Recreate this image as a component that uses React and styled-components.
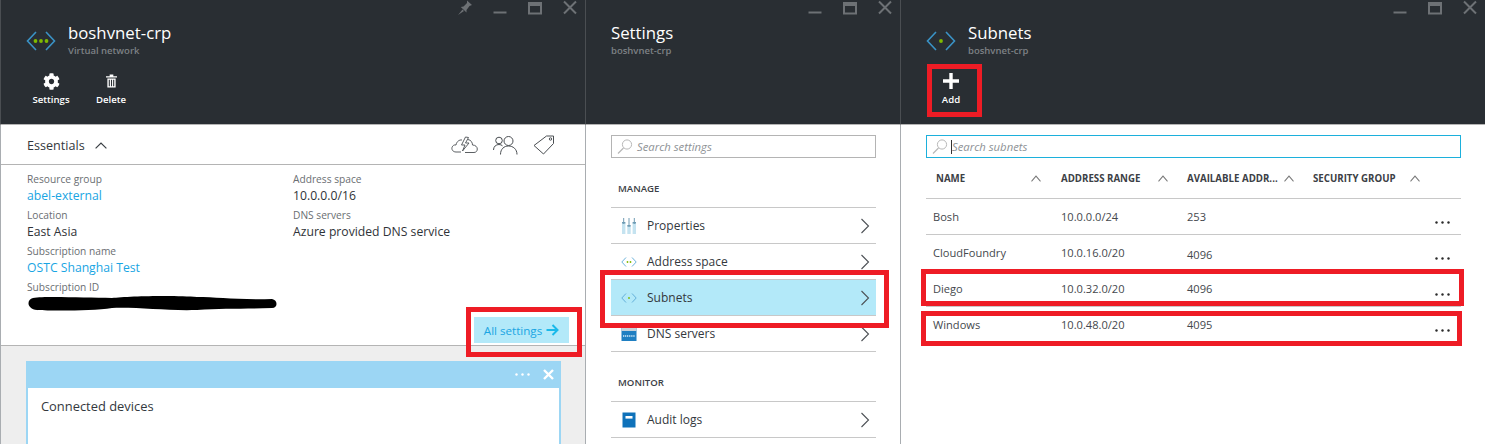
import React from "react";
import styled, { createGlobalStyle } from "styled-components";
import { FaCog } from "react-icons/fa";

const Global = createGlobalStyle`
  * { box-sizing: border-box; }
  html, body { margin: 0; padding: 0; background: #fff; }
  body { font-family: "Open Sans", "Liberation Sans", sans-serif; overflow: hidden; }
`;

const Page = styled.div`
  position: relative; width: 1485px; height: 444px; overflow: hidden;
  display: grid; grid-template-columns: 585px 315px 585px; background: #fff;
`;
const Panel = styled.section`display: flex; flex-direction: column; height: 444px; min-width: 0;`;
const Header = styled.header`
  position: relative; flex: 0 0 125px; background: #292e33;
  border-left: 1px solid #4a4e52; border-bottom: 1px solid #b4b4b4;
  display: flex; flex-direction: column;
`;
const Controls = styled.div`
  height: 18px; display: flex; justify-content: flex-end; align-items: flex-start;
  padding-right: 7px; color: #6d7175;
`;
const Ctl = styled.svg`display: block; width: 16px; height: 16px; margin-left: 19px; flex: none;`;
const TitleRow = styled.div`
  height: 44px; margin-top: 4px; display: flex; align-items: flex-start; padding-left: 25px;
`;
const HexWrap = styled.svg`width: 30px; height: 20px; margin: 9px 12px 0 0; flex: none; display: block;`;
const Titles = styled.div`display: flex; flex-direction: column;`;
const Title = styled.h1`margin: 0; font-size: 16.8px; line-height: 22px; font-weight: 400; color: #fff; white-space: nowrap;`;
const Sub = styled.div`font-size: 9.5px; line-height: 13px; color: #7d8185; font-weight: 600; white-space: nowrap;`;
const Commands = styled.div`display: flex; padding-left: 20px; margin-top: 4px;`;
const Cmd = styled.div`width: 60px; display: flex; flex-direction: column; align-items: center; color: #fff;`;
const CmdIcon = styled.div`height: 22px; display: flex; align-items: center; justify-content: center; font-size: 17px;`;
const CmdLabel = styled.div`font-size: 9.6px; line-height: 14px; margin-top: 1px; font-weight: 600; color: #fff;`;

const Body = styled.div`flex: 1; border-left: 1px solid #a9adb1; display: flex; flex-direction: column; min-height: 0; background: #fff;`;
const EssBar = styled.div`
  flex: 0 0 40px; border-bottom: 1px solid #b4b4b4; display: flex; align-items: center;
  padding: 1px 30px 0 26px; color: #3a3f44;
`;
const EssTitle = styled.span`font-size: 12.6px; color: #33383d; margin-right: 10px;`;
const EssIcons = styled.div`margin-left: auto; display: flex; align-items: center; gap: 15px;`;
const LineIcon = styled.svg`display: block; flex: none;`;
const EssGrid = styled.div`
  padding: 6px 0 0 26px; display: grid; grid-template-columns: 266px 1fr; height: 150px;
`;
const Col = styled.div`display: flex; flex-direction: column;`;
const Field = styled.div`height: 36px;`;
const FLabel = styled.div`font-size: 10.2px; line-height: 16px; color: #6a6e72; white-space: nowrap;`;
const FValue = styled.div`font-size: 12.2px; line-height: 18px; color: ${p => p.$link ? "#19a5e3" : "#2f3338"}; white-space: nowrap;`;
const Scribble = styled.svg`display: block; width: 250px; height: 16px;`;
const EssFoot = styled.div`
  height: 31px; display: flex; justify-content: flex-end; align-items: flex-start; padding: 2px 16px 0 0;
  border-bottom: 1px solid #b4b4b4;
`;
const AllBtn = styled.div`
  width: 95px; height: 26px; background: #b3e9f9; color: #19a5e3; font-size: 11.6px;
  display: flex; align-items: center; justify-content: center; gap: 4px; white-space: nowrap;
`;
const TileZone = styled.div`flex: 1; background: #eeeeee; padding: 15px 24px 0 25px; min-height: 0; overflow: hidden;`;
const Tile = styled.div`height: 120px; border: 2px solid #9cd6f4; border-top: 0; background: #fff;`;
const TileHead = styled.div`
  height: 27px; background: #9cd6f4; display: flex; align-items: center; justify-content: flex-end;
  padding: 0 7px 0 0; gap: 13px;
`;
const TileText = styled.div`padding: 8px 0 0 13px; font-size: 12.9px; line-height: 20px; color: #33383d;`;

const SearchBox = styled.div`
  margin: 10px 0 0 25px; width: ${p => p.$w}px; height: 23px; flex: none;
  border: 1px solid ${p => p.$focus ? "#1cb0dc" : "#b4b4b4"};
  display: flex; align-items: center; padding-left: 5px; gap: ${p => p.$focus ? 3 : 4}px;
`;
const SearchText = styled.span`font-size: 11.3px; font-style: italic; color: #8e9296; white-space: nowrap; ${p => p.$focus ? "border-left: 1px solid #333; line-height: 14px;" : ""}`;
const SectionTitle = styled.div`
  margin-left: 25px; width: 265px; height: 50px; flex: none; padding: 22px 0 0 7px; font-size: 9.6px; line-height: 18px;
  font-weight: 600; color: #3c4045; border-bottom: 1px solid #c8c8c8; text-transform: uppercase;
`;
const MenuRow = styled.div`
  margin-left: 25px; width: 265px; height: 36px; flex: none; display: flex; align-items: center; padding: 0 5px 0 10px;
  border-bottom: 1px solid #c8c8c8; background: ${p => p.$active ? "#b3e9f9" : "transparent"};
`;
const MenuIcon = styled.svg`display: block; width: 16px; height: 16px; flex: none; margin-right: 10px;`;
const MenuText = styled.span`font-size: 12px; color: #33383d; white-space: nowrap;`;
const Chev = styled.svg`display: block; margin-left: auto; flex: none;`;

const Table = styled.div`margin-left: 25px; width: 535px; display: flex; flex-direction: column;`;
const Grid = styled.div`
  display: grid; grid-template-columns: 135px 126px 126px 126px 1fr; align-items: center;
  height: ${p => p.$h}px; border-bottom: 1px solid #c8c8c8;
`;
const Th = styled.div`
  display: flex; justify-content: space-between; align-items: center; font-size: 9.7px; font-weight: 700; color: #3c4045;
  white-space: nowrap; padding-left: ${p => p.$pad ?? 0}px; padding-right: ${p => p.$right ?? 19}px;
`;
const Td = styled.div`
  font-size: 11.1px; color: #44484d; white-space: nowrap;
  padding-left: ${p => p.$pad ?? 0}px; padding-top: ${p => p.$drop ?? 0}px;
`;
const DotsCell = styled.div`grid-column: 4 / -1; display: flex; justify-content: flex-end; padding: 11px 11px 0 0;`;
const DotSvg = styled.svg`display: block; flex: none;`;

const Mark = styled.div`
  position: absolute; left: ${p => p.$x}px; top: ${p => p.$y}px; width: ${p => p.$w}px; height: ${p => p.$h}px;
  border: 5px solid #ee1c25; pointer-events: none;
`;

const Hex = ({ dots }) => (
  <HexWrap viewBox="0 0 30 20">
    <path d="M10 1 L1.5 10 L10 19 M20 1 L28.5 10 L20 19" fill="none" stroke="#3a93c6" strokeWidth="1.6" />
    {dots === 3
      ? [11.5, 17, 22.5].map(x => <circle key={x} cx={x - 2} cy="10" r="1.9" fill="#7fba00" />)
      : <circle cx="15" cy="10" r="1.9" fill="#7fba00" />}
  </HexWrap>
);

const WinControls = ({ pin }) => (
  <Controls>
    {pin && (
      <Ctl viewBox="0 0 16 16"><path d="M10 0.5 L15 5 L12.5 6 L9.5 10 L9.5 12.5 L3.8 7 L6.5 6.5 L10 3 Z M5.5 9.5 L1 15 L7 11 Z" fill="currentColor" /></Ctl>
    )}
    <Ctl viewBox="0 0 16 16"><rect x="1.5" y="11.5" width="13" height="2" fill="currentColor" /></Ctl>
    <Ctl viewBox="0 0 16 16"><path d="M1 2h14v12.5H1z M3 6v6.5h10V6z" fill="currentColor" fillRule="evenodd" /></Ctl>
    <Ctl viewBox="0 0 16 16"><path d="M2 1.5 L14 13.5 M14 1.5 L2 13.5" stroke="currentColor" strokeWidth="2" fill="none" /></Ctl>
  </Controls>
);

const Chevron = () => (
  <Chev width="12" height="16" viewBox="0 0 12 16"><path d="M2.5 1 L9.5 8 L2.5 15" fill="none" stroke="#4d5156" strokeWidth="1.1" /></Chev>
);
const SortUp = ({ w = 10, color = "#777" }) => (
  <svg width={w} height="7" viewBox="0 0 10 6" preserveAspectRatio="none" style={{ display: "block", flex: "none" }}><path d="M0.5 5.5 L5 1 L9.5 5.5" fill="none" stroke={color} strokeWidth="1" /></svg>
);
const Magnifier = () => (
  <svg width="16" height="15" viewBox="0 0 16 15" style={{ display: "block", flex: "none" }}>
    <circle cx="10" cy="5.5" r="4.6" fill="none" stroke="#b8b8b8" strokeWidth="1" />
    <path d="M6.5 9 L1 14.5" stroke="#b8b8b8" strokeWidth="1.2" />
  </svg>
);
const Dots = ({ color = "#2a2a2a" }) => (
  <DotSvg width="15" height="3" viewBox="0 0 15 3">
    {[1.5, 7.5, 13.5].map(x => <circle key={x} cx={x} cy="1.5" r="1.2" fill={color} />)}
  </DotSvg>
);

const fieldsL = [
  ["Resource group", "abel-external", true],
  ["Location", "East Asia"],
  ["Subscription name", "OSTC Shanghai Test", true],
];
const fieldsR = [
  ["Address space", "10.0.0.0/16"],
  ["DNS servers", "Azure provided DNS service"],
];
const rows = [
  ["Bosh", "10.0.0.0/24", "253"],
  ["CloudFoundry", "10.0.16.0/20", "4096", 3],
  ["Diego", "10.0.32.0/20", "4096"],
  ["Windows", "10.0.48.0/20", "4095"],
];

const SmallHex = ({ dots }) => (
  <MenuIcon viewBox="0 0 16 16">
    <path d="M5 3.5 L0.8 8 L5 12.5 M11 3.5 L15.2 8 L11 12.5" fill="none" stroke="#5aa9d6" strokeWidth="0.9" />
    {dots === 2
      ? [6.5, 9.5].map(x => <circle key={x} cx={x} cy="8" r="0.9" fill="#7fba00" />)
      : <circle cx="8" cy="8" r="0.9" fill="#7fba00" />}
  </MenuIcon>
);

export default function App() {
  return (
    <Page>
      <Global />
      <Panel>
        <Header>
          <WinControls pin />
          <TitleRow>
            <Hex dots={3} />
            <Titles>
              <Title>boshvnet-crp</Title>
              <Sub>Virtual network</Sub>
            </Titles>
          </TitleRow>
          <Commands>
            <Cmd><CmdIcon><FaCog /></CmdIcon><CmdLabel>Settings</CmdLabel></Cmd>
            <Cmd>
              <CmdIcon>
                <svg width="11" height="14" viewBox="0 0 12 16" preserveAspectRatio="none" style={{ display: "block" }}>
                  <path d="M0 2.5h12v1.4H0z M4 0.5h4v2H4z" fill="#fff" />
                  <path d="M1.5 5h9v10.5h-9z M3 6.5v7.5h1.2V6.5z M5.4 6.5v7.5h1.2V6.5z M7.8 6.5v7.5H9V6.5z" fill="#fff" fillRule="evenodd" />
                </svg>
              </CmdIcon>
              <CmdLabel>Delete</CmdLabel>
            </Cmd>
          </Commands>
        </Header>
        <Body>
          <EssBar>
            <EssTitle>Essentials</EssTitle>
            <SortUp w={12} color="#3a3f44" />
            <EssIcons>
              <LineIcon width="27" height="20" viewBox="0 0 27 20" fill="none" stroke="#4a4e52" strokeWidth="0.9">
                <path d="M10 17 H5 C1.5 17 0.5 14 1 12.5 C1.5 10.5 3.5 9.5 5 10 C5.5 6.5 8.5 4.5 11 5 M17 4.5 C20 5 21.5 7.5 21.5 10 C24.5 10 26.3 12 26.3 14 C26.3 16 25 17.5 23 17.5 H14" />
                <path d="M14.5 2 L10.5 10 H14 L11.5 16 L18 8 H14.5 L17.5 2.5 Z" fill="#fff" />
              </LineIcon>
              <LineIcon width="25" height="20" viewBox="0 0 25 20" fill="none" stroke="#4a4e52" strokeWidth="1">
                <circle cx="15.5" cy="6" r="4.5" />
                <path d="M7.5 19.5 C7.5 14 11 11 15.5 11 C20 11 24 14 24 19.5" />
                <circle cx="6" cy="5.5" r="3.3" />
                <path d="M0.5 15 C0.5 11.5 3 9.5 6 9.5 C7.5 9.5 8.5 10 9.5 10.8" />
              </LineIcon>
              <LineIcon width="22" height="20" viewBox="0 0 22 20" fill="none" stroke="#4a4e52" strokeWidth="1">
                <path d="M13.5 1 H20.5 V8.5 L10.5 19 L1 10.5 Z" />
                <circle cx="17.5" cy="4" r="1.2" />
              </LineIcon>
            </EssIcons>
          </EssBar>
          <EssGrid>
            <Col>
              {fieldsL.map(([l, v, link]) => (
                <Field key={l}><FLabel>{l}</FLabel><FValue $link={link}>{v}</FValue></Field>
              ))}
              <Field>
                <FLabel>Subscription ID</FLabel>
                <Scribble viewBox="0 0 250 16" preserveAspectRatio="none">
                  <path d="M6 3 C20 1 60 3 85 3 C100 1 150 0 170 2 C190 2 210 5 245 4 C251 5 251 13 245 13 C215 14 195 13 170 15 C140 16 110 12 85 13 C65 16 25 16 10 15 C0 14 -1 5 6 3 Z" fill="#000" />
                </Scribble>
              </Field>
            </Col>
            <Col>
              {fieldsR.map(([l, v]) => (
                <Field key={l}><FLabel>{l}</FLabel><FValue>{v}</FValue></Field>
              ))}
            </Col>
          </EssGrid>
          <EssFoot>
            <AllBtn>
              All settings
              <svg width="13" height="12" viewBox="0 0 13 12" style={{ display: "block", flex: "none" }}>
                <path d="M0.5 6 H11 M6.5 1 L11.5 6 L6.5 11" fill="none" stroke="#19b9ea" strokeWidth="2" />
              </svg>
            </AllBtn>
          </EssFoot>
          <TileZone>
            <TileHead>
              <Dots color="#fff" />
              <svg width="11" height="11" viewBox="0 0 11 11" style={{ display: "block", flex: "none" }}>
                <path d="M1 1 L10 10 M10 1 L1 10" stroke="#fff" strokeWidth="2.4" />
              </svg>
            </TileHead>
            <Tile><TileText>Connected devices</TileText></Tile>
          </TileZone>
        </Body>
      </Panel>

      <Panel>
        <Header>
          <WinControls />
          <TitleRow>
            <Titles>
              <Title>Settings</Title>
              <Sub>boshvnet-crp</Sub>
            </Titles>
          </TitleRow>
        </Header>
        <Body>
          <SearchBox $w={265}>
            <Magnifier />
            <SearchText>Search settings</SearchText>
          </SearchBox>
          <SectionTitle>Manage</SectionTitle>
          <MenuRow>
            <MenuIcon viewBox="0 0 16 16">
              <path d="M1 5h3.4v11H1z M6.3 8h3.4v8H6.3z M11.6 5h3.4v11h-3.4z" fill="#c5e3f0" />
              <path d="M2.7 0v6M8 0v9M13.3 0v6" stroke="#6e9bb3" strokeWidth="1" />
              <path d="M1 4h3.4v1.5H1z M6.3 7h3.4v1.5H6.3z M11.6 4h3.4v1.5h-3.4z" fill="#6e9bb3" />
            </MenuIcon>
            <MenuText>Properties</MenuText>
            <Chevron />
          </MenuRow>
          <MenuRow>
            <SmallHex dots={2} />
            <MenuText>Address space</MenuText>
            <Chevron />
          </MenuRow>
          <MenuRow $active>
            <SmallHex />
            <MenuText>Subnets</MenuText>
            <Chevron />
          </MenuRow>
          <MenuRow>
            <MenuIcon viewBox="0 0 16 16">
              <rect x="0.5" y="1" width="15" height="14" fill="#1f7fc2" />
              <rect x="0.5" y="1" width="15" height="4" fill="#c8d2da" />
              <path d="M2 10h12" stroke="#d5ecf9" strokeWidth="1.6" strokeDasharray="1.2 0.7" />
            </MenuIcon>
            <MenuText>DNS servers</MenuText>
            <Chevron />
          </MenuRow>
          <SectionTitle>Monitor</SectionTitle>
          <MenuRow>
            <MenuIcon viewBox="0 0 16 16">
              <rect x="1.5" y="0.5" width="13" height="15" fill="#0f72ba" />
              <rect x="4.5" y="4" width="7" height="2.6" fill="#fff" />
            </MenuIcon>
            <MenuText>Audit logs</MenuText>
            <Chevron />
          </MenuRow>
        </Body>
      </Panel>

      <Panel>
        <Header>
          <WinControls />
          <TitleRow>
            <Hex dots={1} />
            <Titles>
              <Title>Subnets</Title>
              <Sub>boshvnet-crp</Sub>
            </Titles>
          </TitleRow>
          <Commands>
            <Cmd>
              <CmdIcon>
                <svg width="16" height="16" viewBox="0 0 16 16" style={{ display: "block" }}>
                  <path d="M6.3 0h3.4v6.3H16v3.4H9.7V16H6.3V9.7H0V6.3h6.3z" fill="#fff" />
                </svg>
              </CmdIcon>
              <CmdLabel>Add</CmdLabel>
            </Cmd>
          </Commands>
        </Header>
        <Body>
          <SearchBox $w={535} $focus>
            <Magnifier />
            <SearchText $focus>Search subnets</SearchText>
          </SearchBox>
          <Table>
            <Grid $h={41}>
              <Th $pad={10} $right={20}>NAME<SortUp /></Th>
              <Th>ADDRESS RANGE<SortUp /></Th>
              <Th>AVAILABLE ADDR...<SortUp /></Th>
              <Th>SECURITY GROUP<SortUp /></Th>
            </Grid>
            {rows.map(r => (
              <Grid $h={36} key={r[0]}>
                <Td $pad={7}>{r[0]}</Td>
                <Td>{r[1]}</Td>
                <Td $drop={r[3]}>{r[2]}</Td>
                <DotsCell><Dots /></DotsCell>
              </Grid>
            ))}
          </Table>
        </Body>
      </Panel>

      <Mark $x={466} $y={307} $w={116} $h={50} />
      <Mark $x={600} $y={270} $w={289} $h={58} />
      <Mark $x={927} $y={64} $w={55} $h={53} />
      <Mark $x={921} $y={269} $w={543} $h={37} />
      <Mark $x={921} $y={311} $w={541} $h={35} />
    </Page>
  );
}
